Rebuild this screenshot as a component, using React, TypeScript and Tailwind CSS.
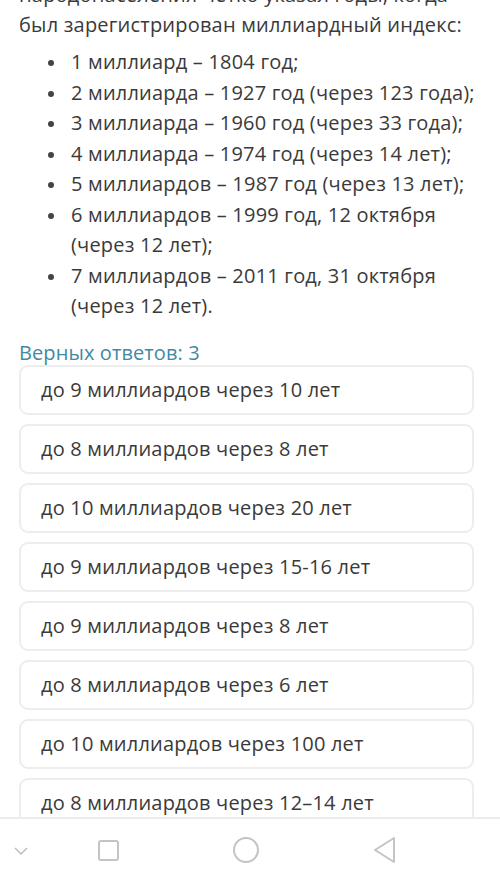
import React from 'react';

const facts: string[][] = [
  ['1 миллиард – 1804 год;'],
  ['2 миллиарда – 1927 год (через 123 года);'],
  ['3 миллиарда – 1960 год (через 33 года);'],
  ['4 миллиарда – 1974 год (через 14 лет);'],
  ['5 миллиардов – 1987 год (через 13 лет);'],
  ['6 миллиардов – 1999 год, 12 октября', '(через 12 лет);'],
  ['7 миллиардов – 2011 год, 31 октября', '(через 12 лет).'],
];

const answers = [
  'до 9 миллиардов через 10 лет',
  'до 8 миллиардов через 8 лет',
  'до 10 миллиардов через 20 лет',
  'до 9 миллиардов через 15-16 лет',
  'до 9 миллиардов через 8 лет',
  'до 8 миллиардов через 6 лет',
  'до 10 миллиардов через 100 лет',
  'до 8 миллиардов через 12–14 лет',
];

const NavBar: React.FC = () => (
  <div className="absolute left-0 right-0 bottom-0 h-[67px] bg-white border-t-2 border-[#ececec] flex items-center">
    <svg className="absolute left-[13px] top-[26px]" width="16" height="12" viewBox="0 0 16 12">
      <path d="M2 3 L8 9 L14 3" fill="none" stroke="#bdbdbd" strokeWidth="1.5" />
    </svg>
    <div className="absolute left-[98px] top-[21px] w-[21px] h-[21px] border-2 border-[#c4c4c4] rounded-[3px]" />
    <div className="absolute left-[233px] top-[18px] w-[26px] h-[26px] border-2 border-[#c4c4c4] rounded-full" />
    <svg className="absolute left-[372px] top-[16px]" width="26" height="30" viewBox="0 0 26 30">
      <path d="M22 3 L22 27 L3 15 Z" fill="none" stroke="#c4c4c4" strokeWidth="2" strokeLinejoin="round" />
    </svg>
  </div>
);

export default function App() {
  return (
    <div className="relative w-[500px] h-[884px] overflow-hidden bg-white text-[#3a3a3a] font-['Open_Sans',sans-serif]">
      <div className="px-[19px] -mt-[20px]">
        <p className="text-[20px] leading-[30px] tracking-[0.2px] whitespace-nowrap">
          <span className="block">народонаселения четко указал годы, когда</span>
          <span className="block">был зарегистрирован миллиардный индекс:</span>
        </p>
        <ul className="mt-[7px] pl-[29px] text-[20px] leading-[30.5px] tracking-[0.2px]">
          {facts.map((lines, i) => (
            <li key={i} className="flex">
              <span className="w-[23px] shrink-0 flex items-start pt-[13px]">
                <span className="w-[6px] h-[6px] rounded-full bg-[#444]" />
              </span>
              <span>
                {lines.map((l, j) => (
                  <span key={j} className="block">{l}</span>
                ))}
              </span>
            </li>
          ))}
        </ul>
        <div className="mt-[20px] text-[20px] leading-[21px] tracking-[0.1px] text-[#3f8aa5]">Верных ответов: 3</div>
        <div className="mt-[2px] w-[455px] flex flex-col gap-[9px]">
          {answers.map((a) => (
            <div
              key={a}
              className="h-[50px] flex items-center pl-[20px] border-2 border-[#ededed] rounded-[9px] text-[20px] tracking-[0.2px]"
            >
              {a}
            </div>
          ))}
        </div>
      </div>
      <NavBar />
    </div>
  );
}
